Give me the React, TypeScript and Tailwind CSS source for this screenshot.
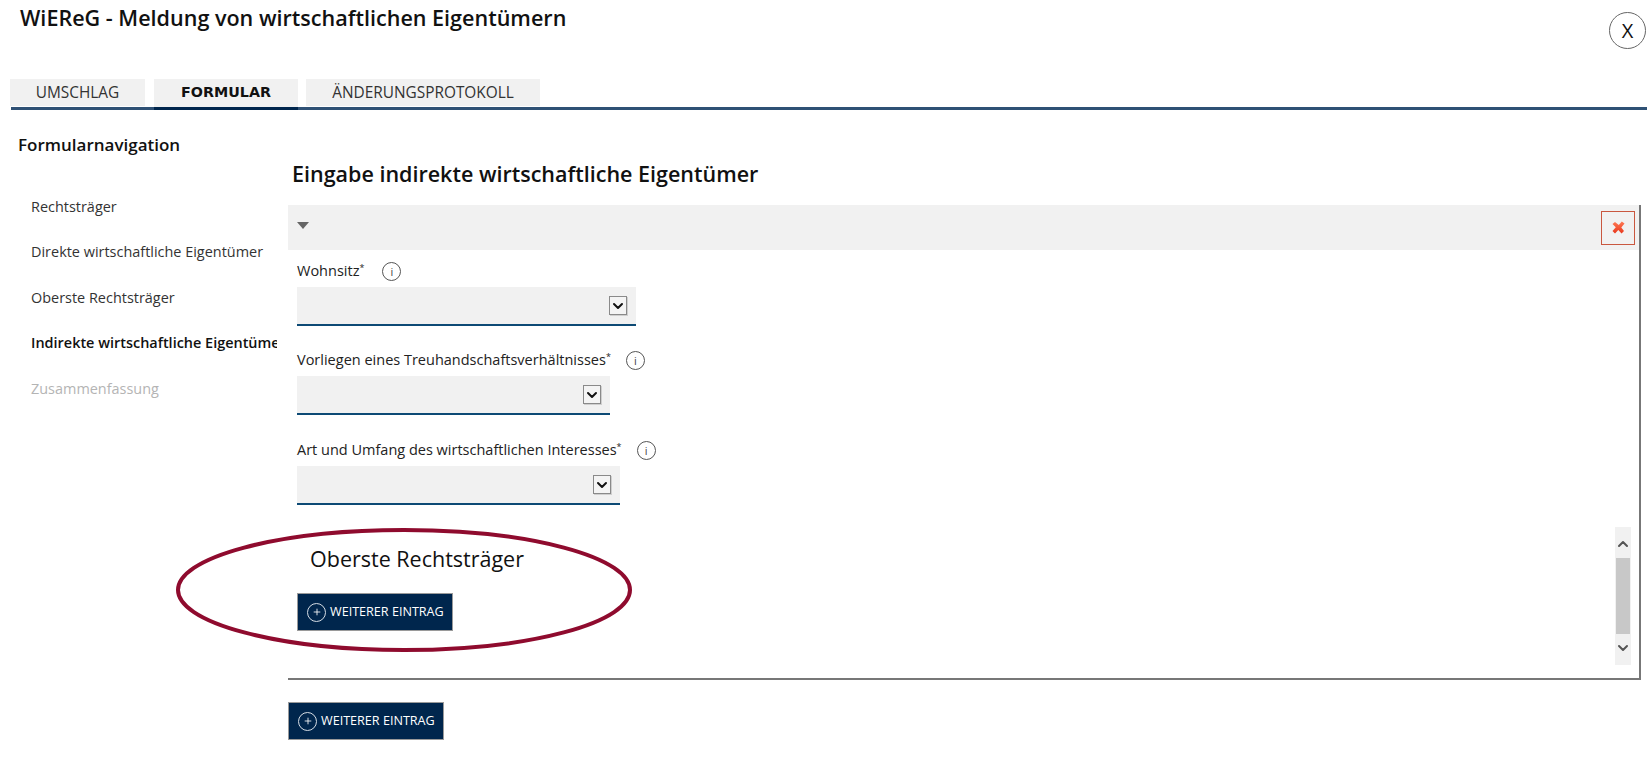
import { ChevronDown, ChevronUp, Plus } from "lucide-react";

const navItems = [
  { label: "Rechtsträger", cls: "text-[#333333]" },
  { label: "Direkte wirtschaftliche Eigentümer", cls: "text-[#333333]" },
  { label: "Oberste Rechtsträger", cls: "text-[#333333]" },
  { label: "Indirekte wirtschaftliche Eigentümer", cls: "font-semibold text-[#111111]" },
  { label: "Zusammenfassung", cls: "text-[#b4b4b4]" },
];

function InfoIcon() {
  return (
    <span className="flex h-[19px] w-[19px] items-center justify-center rounded-full border border-[#555555] text-[11px] leading-none text-[#444444]">
      i
    </span>
  );
}

function SelectField({ label, width, iconGap, mb }: { label: string; width: string; iconGap: string; mb: string }) {
  return (
    <div className={mb}>
      <div className="flex h-[20px] items-center text-[14.5px] text-[#222222]">
        <span>{label}</span>
        <span className="-mt-[6px] text-[9px]">*</span>
        <span className={iconGap}>
          <InfoIcon />
        </span>
      </div>
      <div className={`mt-[6px] flex h-[39px] items-center justify-end border-b-2 border-[#0d4a75] bg-[#f1f1f1] pr-[9px] ${width}`}>
        <span className="flex h-[19px] w-[18px] items-center justify-center border border-[#8a8a8a] bg-[#f4f4f4] shadow-[1px_1px_0_#cfcfcf]">
          <ChevronDown size={16} strokeWidth={3} className="text-[#111111]" />
        </span>
      </div>
    </div>
  );
}

function AddButton() {
  return (
    <button className="flex h-[38px] w-[156px] items-center gap-[4px] border border-[#9a9a9a] bg-[#00264d] pl-[9px] text-[12.6px] text-white">
      <span className="flex h-[19px] w-[19px] items-center justify-center rounded-full border border-[#d5dce4]">
        <Plus size={10} strokeWidth={2} />
      </span>
      WEITERER EINTRAG
    </button>
  );
}

export default function App() {
  return (
    <div className="relative h-[760px] w-[1650px] overflow-hidden bg-white font-['Open_Sans',sans-serif] text-[#111111]">
      <div className="flex h-[79px] items-start justify-between pl-[20px] pr-[4px]">
        <h1 className="mt-[3px] text-[21.55px] font-semibold leading-[29px]">WiEReG - Meldung von wirtschaftlichen Eigentümern</h1>
        <button className="mt-[12px] flex h-[37px] w-[37px] items-center justify-center rounded-full border border-[#666666] text-[20px] leading-none">
          X
        </button>
      </div>

      <div className="ml-[11px] mr-[3px] flex h-[31px] border-b-[3px] border-[#2f5175]">
        <div className="-ml-[1px] flex h-[27px] w-[135px] items-center justify-center bg-[#f1f1f1] text-[15.4px] text-[#333333]">UMSCHLAG</div>
        <div className="ml-[9px] flex h-[31px] w-[144px] items-center justify-center border-b-[3px] border-[#00264d] bg-[#f1f1f1] pb-[1px] font-['DejaVu_Sans',sans-serif] text-[14.3px] font-bold text-[#111111]">FORMULAR</div>
        <div className="ml-[8px] flex h-[27px] w-[234px] items-center justify-center bg-[#f1f1f1] text-[15.4px] text-[#333333]">ÄNDERUNGSPROTOKOLL</div>
      </div>

      <div className="flex">
        <aside className="w-[288px] shrink-0 overflow-hidden">
          <h2 className="mt-[24px] pl-[18px] text-[17px] font-semibold leading-[22px]">Formularnavigation</h2>
          <nav className="mt-[39.5px] w-[277px] overflow-hidden pl-[31px]">
            {navItems.map((item) => (
              <div key={item.label} className={`h-[45.5px] whitespace-nowrap text-[14.45px] leading-[22px] ${item.cls}`}>
                {item.label}
              </div>
            ))}
          </nav>
        </aside>

        <main className="w-[1353px]">
          <h2 className="mt-[49px] pl-[4px] text-[21.5px] font-semibold leading-[29px]">Eingabe indirekte wirtschaftliche Eigentümer</h2>
          <div className="mt-[17px] h-[475px] border-b-2 border-r-2 border-[#777777]">
            <div className="flex h-[45px] items-center justify-between bg-[#f1f1f1] pl-[9px] pr-[4px]">
              <span className="-mt-[4px] h-0 w-0 border-x-[6px] border-t-[7px] border-x-transparent border-t-[#666666]" />
              <button className="flex h-[34px] w-[34px] items-center justify-center border border-[#c9573f]">
                <svg width="15" height="15" viewBox="0 0 15 15">
                  <defs>
                    <linearGradient id="closeRed" x1="0" y1="0" x2="0" y2="1">
                      <stop offset="0" stopColor="#ff7a55" />
                      <stop offset="1" stopColor="#e8371c" />
                    </linearGradient>
                  </defs>
                  <path
                    d="M1.5 4 L4 2 L7.8 5 L10.8 1.5 L13.5 3.5 L10.3 7.4 L13 11 L10.5 13.5 L7.3 10 L4 13.5 L1.5 11 L4.8 7.3 Z"
                    fill="url(#closeRed)"
                  />
                </svg>
              </button>
            </div>

            <div className="flex">
              <div className="flex-1 pl-[9px] pt-[11px]">
                <SelectField label="Wohnsitz" width="w-[339px]" iconGap="ml-[18px]" mb="mb-[24px]" />
                <SelectField label="Vorliegen eines Treuhandschaftsverhältnisses" width="w-[313px]" iconGap="ml-[15px]" mb="mb-[25px]" />
                <SelectField label="Art und Umfang des wirtschaftlichen Interesses" width="w-[323px]" iconGap="ml-[15px]" mb="mb-[39px]" />
                <h3 className="pl-[13px] text-[21.5px] leading-[29px]">Oberste Rechtsträger</h3>
                <div className="mt-[20px]">
                  <AddButton />
                </div>
              </div>
              <div className="mr-[8px] mt-[277px] flex h-[138px] w-[16px] flex-col items-center justify-between bg-[#f1f1f1]">
                <ChevronUp size={16} strokeWidth={3} className="mt-[9px] text-[#555555]" />
                <div className="absolute mt-[31px] h-[76px] w-[14px] bg-[#c8c8c8]" />
                <ChevronDown size={16} strokeWidth={3} className="mb-[9px] text-[#555555]" />
              </div>
            </div>
          </div>
          <div className="mt-[22px]">
            <AddButton />
          </div>
        </main>
      </div>

      {/* hand drawn marker around the section title */}
      <svg className="absolute left-[174px] top-[526px]" width="460" height="128" viewBox="0 0 460 128" fill="none">
        <ellipse cx="230" cy="64" rx="226" ry="60" stroke="#8f0b2e" strokeWidth="4" />
      </svg>
    </div>
  );
}
